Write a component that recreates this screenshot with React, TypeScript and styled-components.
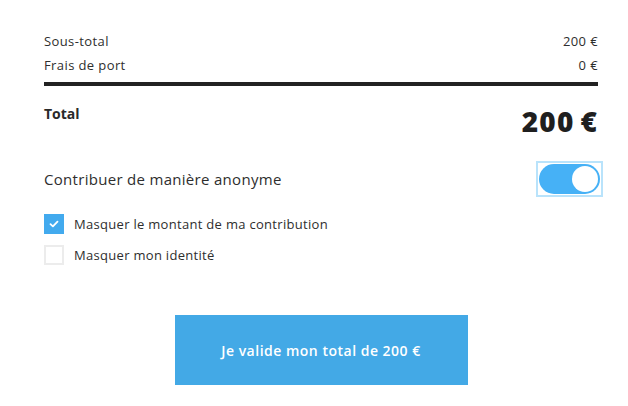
import { useState } from "react";
import styled, { createGlobalStyle } from "styled-components";

const GlobalStyle = createGlobalStyle`
  body {
    margin: 0;
    background: #fff;
    font-family: "Open Sans", "Liberation Sans", sans-serif;
    color: #2a2a2a;
  }
`;

const App = () => {
  const [anonymous, setAnonymous] = useState(true);
  const [hideAmount, setHideAmount] = useState(true);
  const [hideIdentity, setHideIdentity] = useState(false);

  return (
    <>
      <GlobalStyle />
      <Container>
        <SummaryRow>
          <span>Sous-total</span>
          <span>200 €</span>
        </SummaryRow>
        <SummaryRow>
          <span>Frais de port</span>
          <span>0 €</span>
        </SummaryRow>
        <Rule />
        <TotalRow>
          <TotalLabel>Total</TotalLabel>
          <TotalAmount>200&#8201;€</TotalAmount>
        </TotalRow>
        <AnonymousRow>
          <span>Contribuer de manière anonyme</span>
          <Switch
            role="switch"
            aria-checked={anonymous}
            onClick={() => setAnonymous(!anonymous)}
          >
            <Track $on={anonymous}>
              <Knob $on={anonymous} />
            </Track>
          </Switch>
        </AnonymousRow>
        <Options>
          <CheckRow onClick={() => setHideAmount(!hideAmount)}>
            <Box $checked={hideAmount}>
              {hideAmount && (
                <svg width="10" height="8" viewBox="0 0 10 8">
                  <path
                    d="M1.5 4.2 L3.9 6.4 L8.5 1.6"
                    fill="none"
                    stroke="#fff"
                    strokeWidth="1.8"
                    strokeLinecap="round"
                    strokeLinejoin="round"
                  />
                </svg>
              )}
            </Box>
            <span>Masquer le montant de ma contribution</span>
          </CheckRow>
          <CheckRow onClick={() => setHideIdentity(!hideIdentity)}>
            <Box $checked={hideIdentity} />
            <span>Masquer mon identité</span>
          </CheckRow>
        </Options>
        <Actions>
          <SubmitButton>Je valide mon total de 200 €</SubmitButton>
        </Actions>
      </Container>
    </>
  );
};

export default App;

const Container = styled.div`
  box-sizing: border-box;
  width: 598px;
  padding: 29px 0 0 44px;
`;

const SummaryRow = styled.div`
  display: flex;
  justify-content: space-between;
  align-items: center;
  height: 24px;
  font-size: 13px;
  letter-spacing: 0.4px;
  color: #2e2e2e;
`;

const Rule = styled.div`
  height: 4px;
  margin-top: 5px;
  background: #222;
`;

const TotalRow = styled.div`
  display: flex;
  justify-content: space-between;
  align-items: flex-start;
  margin-top: 18px;
`;

const TotalLabel = styled.span`
  font-size: 14px;
  font-weight: 700;
  line-height: 20px;
`;

const TotalAmount = styled.span`
  font-size: 28px;
  font-weight: 800;
  line-height: 34px;
  letter-spacing: 1.2px;
  color: #1f1f1f;
`;

const AnonymousRow = styled.div`
  display: flex;
  justify-content: space-between;
  align-items: center;
  margin-top: 23px;
  font-size: 15px;
  letter-spacing: 0.3px;
  color: #2e2e2e;
`;

const Switch = styled.button`
  margin-right: -5px;
  padding: 1px;
  border: 2px solid #b9e3fb;
  background: transparent;
  cursor: pointer;
  line-height: 0;
`;

const Track = styled.span<{ $on: boolean }>`
  position: relative;
  display: block;
  width: 61px;
  height: 30px;
  border-radius: 15px;
  background: ${(p) => (p.$on ? "#46b1f6" : "#d8d8d8")};
`;

const Knob = styled.span<{ $on: boolean }>`
  position: absolute;
  top: 2px;
  left: ${(p) => (p.$on ? "33px" : "2px")};
  width: 26px;
  height: 26px;
  border-radius: 50%;
  background: #fff;
`;

const Options = styled.div`
  display: flex;
  flex-direction: column;
  gap: 11px;
  margin-top: 17px;
`;

const CheckRow = styled.label`
  display: flex;
  align-items: center;
  gap: 10px;
  height: 20px;
  font-size: 13px;
  letter-spacing: 0.3px;
  color: #2e2e2e;
  cursor: pointer;
`;

const Box = styled.span<{ $checked: boolean }>`
  box-sizing: border-box;
  display: flex;
  align-items: center;
  justify-content: center;
  width: 20px;
  height: 20px;
  background: ${(p) => (p.$checked ? "#42aaee" : "#fff")};
  border: ${(p) => (p.$checked ? "none" : "2px solid #ececec")};
`;

const Actions = styled.div`
  display: flex;
  justify-content: center;
  margin-top: 50px;
`;

const SubmitButton = styled.button`
  width: 293px;
  height: 70px;
  border: none;
  background: #43a9e6;
  color: #fff;
  font-family: "Open Sans", "Liberation Sans", sans-serif;
  font-size: 14px;
  font-weight: 600;
  letter-spacing: 0.5px;
  cursor: pointer;
`;
